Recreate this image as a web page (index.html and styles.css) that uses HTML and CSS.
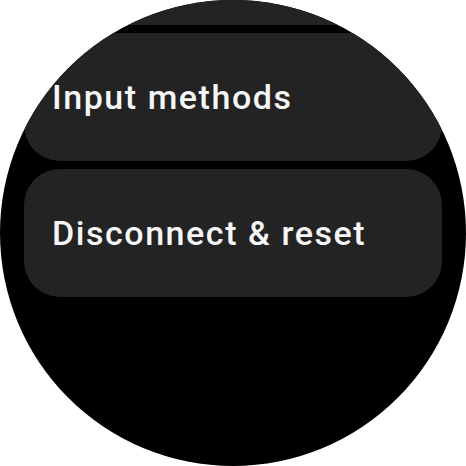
FILE: index.html
```html
<!DOCTYPE html>
<html>
<head>
<meta charset="utf-8">
<link rel="stylesheet" href="styles.css">
</head>
<body>
<div class="screen">
  <div class="list">
    <div class="chip"></div>
    <div class="chip"><span class="label">Input methods</span></div>
    <div class="chip"><span class="label">Disconnect &amp; reset</span></div>
  </div>
</div>
</body>
</html>
```
FILE: styles.css
```css
html, body {
  margin: 0;
  padding: 0;
  background: #ffffff;
}
.screen {
  width: 466px;
  height: 466px;
  border-radius: 50%;
  overflow: hidden;
  background: #000000;
}
.list {
  display: flex;
  flex-direction: column;
  gap: 8px;
  padding: 0 24px;
  margin-top: -103px;
}
.chip {
  height: 128px;
  border-radius: 36px;
  background: #232323;
  display: flex;
  align-items: center;
  padding: 0 28px;
  box-sizing: border-box;
}
.label {
  font-family: Roboto, "Noto Sans", sans-serif;
  font-weight: 500;
  font-size: 34px;
  letter-spacing: 1.55px;
  color: #f6f6f6;
  white-space: nowrap;
}
```
